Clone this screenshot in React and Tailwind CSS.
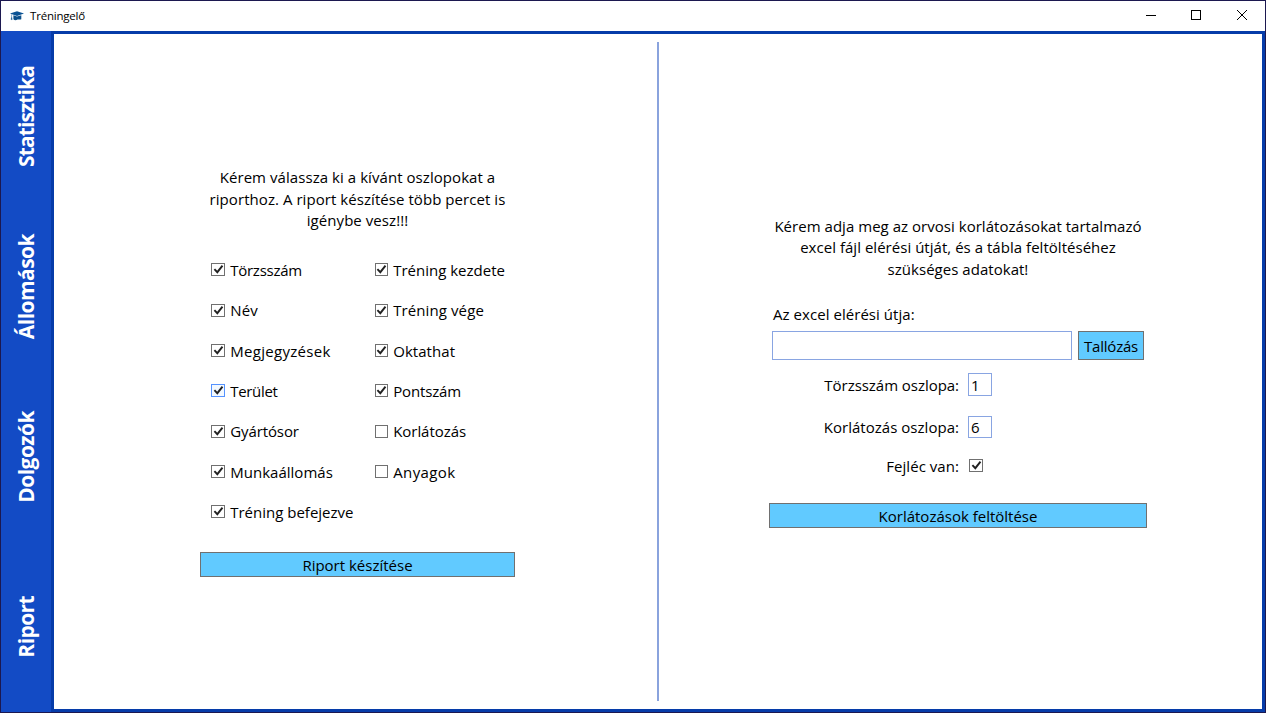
const leftColumn = [
  { label: "Törzsszám", checked: true, track: "tracking-[-0.25px]" },
  { label: "Név", checked: true, track: "tracking-[0.2px]" },
  { label: "Megjegyzések", checked: true, track: "tracking-[0.3px]" },
  { label: "Terület", checked: true, hot: true, track: "tracking-[-0.3px]" },
  { label: "Gyártósor", checked: true, track: "tracking-[-0.1px]" },
  { label: "Munkaállomás", checked: true, track: "tracking-[0.02px]" },
  { label: "Tréning befejezve", checked: true, track: "tracking-[0px]" },
];

const rightColumn = [
  { label: "Tréning kezdete", checked: true, track: "tracking-[0px]" },
  { label: "Tréning vége", checked: true, track: "tracking-[0.1px]" },
  { label: "Oktathat", checked: true, track: "tracking-[0.05px]" },
  { label: "Pontszám", checked: true, track: "tracking-[-0.15px]" },
  { label: "Korlátozás", checked: false, track: "tracking-[-0.05px]" },
  { label: "Anyagok", checked: false, track: "tracking-[0.4px]" },
];

function CheckBox({ checked, hot, narrow }) {
  return (
    <span
      className={`flex h-[13px] shrink-0 items-center justify-center border ${narrow ? "w-[13px]" : "w-[14px]"} ${
        hot ? "border-[#5593ff] bg-[#f3f9ff]" : "border-[#707070] bg-white"
      }`}
    >
      {checked && (
        <svg width="11" height="11" viewBox="0 0 11 11" className="shrink-0">
          <path d="M1.4 5.2 L4.3 8.2 L9.5 1.6" fill="none" stroke="#212121" strokeWidth="1.9" />
        </svg>
      )}
    </span>
  );
}

function Option({ label, checked, hot, narrow, track }) {
  return (
    <label className="flex h-[40.3px] items-center gap-[5.2px] whitespace-nowrap">
      <CheckBox checked={checked} hot={hot} narrow={narrow} />
      <span className={`pt-[1.8px] ${track}`}>{label}</span>
    </label>
  );
}

function Tab({ children, track }) {
  return (
    <div className="flex flex-1 items-center justify-center">
      <span
        className={`rotate-180 text-[21px] leading-[30px] font-bold whitespace-nowrap text-white [writing-mode:vertical-rl] ${track}`}
      >
        {children}
      </span>
    </div>
  );
}

function TitleBar() {
  return (
    <header className="flex h-[30px] shrink-0 items-center bg-white pl-[9px]">
      <svg width="15" height="11" viewBox="0 0 15 11">
        <path d="M0 2.6 L7 0.2 L14 2.6 L7 5 Z" fill="#0b5394" />
        <path d="M3.4 4.3 L7 5.6 L11.3 4.3 V8.2 C10 9.2 8.6 8 7.4 8.6 C6 9.4 4.6 9.4 3.4 8.2 Z" fill="#0b4f8a" />
        <path d="M1.6 3.2 V6.2 L1 8.6 H2.2 L1.8 6.2" fill="#0b5394" stroke="#0b5394" strokeWidth="0.4" />
      </svg>
      <span className="ml-[5px] text-[11.5px] leading-[16px] tracking-[-0.2px]">Tréningelő</span>
      <div className="ml-auto flex h-full items-center">
        <svg width="138" height="30" viewBox="0 0 138 30" fill="none" stroke="#000">
          <path d="M19 14.5 H29" />
          <rect x="64.5" y="9.5" width="9" height="9" />
          <path d="M110 9 L120 19 M120 9 L110 19" />
        </svg>
      </div>
    </header>
  );
}

export default function App() {
  return (
    <div className="flex h-[713px] w-[1266px] flex-col overflow-hidden border border-[#1c1850] bg-white font-['Open_Sans','Noto_Sans',sans-serif] text-[15px] leading-[21.5px] text-black">
      <TitleBar />
      <div className="flex min-h-0 flex-1">
        <nav className="flex w-[50px] shrink-0 flex-col bg-[#134bc5]">
          <Tab track="tracking-[-0.9px]">Statisztika</Tab>
          <Tab track="tracking-[-0.55px]">Állomások</Tab>
          <Tab track="tracking-[-0.55px]">Dolgozók</Tab>
          <Tab track="tracking-[-0.6px]">Riport</Tab>
        </nav>
        <main className="flex flex-1 border-[3px] border-[#063ca9] py-2">
          <section className="flex w-[603px] flex-col items-start pt-[125px] pl-[146px]">
            <p className="flex w-[315px] flex-col items-center tracking-[0.06px] whitespace-nowrap">
              <span>Kérem válassza ki a kívánt oszlopokat a</span>
              <span>riporthoz. A riport készítése több percet is</span>
              <span>igénybe vesz!!!</span>
            </p>
            <div className="mt-[18.3px] flex pl-[11px]">
              <div className="w-[164px]">
                {leftColumn.map((o) => (
                  <Option key={o.label} {...o} />
                ))}
              </div>
              <div>
                {rightColumn.map((o) => (
                  <Option key={o.label} {...o} narrow />
                ))}
              </div>
            </div>
            <button className="mt-[19.8px] flex h-[25px] w-[315px] items-center justify-center border border-[#707070] bg-[#61caff] pt-[3px]">
              Riport készítése
            </button>
          </section>
          <div className="w-[2px] shrink-0 bg-[#8aa3dd]" />
          <section className="flex flex-1 flex-col items-start pt-[173.9px] pl-[110px]">
            <p className="flex w-[378px] flex-col items-center tracking-[0.03px] whitespace-nowrap">
              <span>Kérem adja meg az orvosi korlátozásokat tartalmazó</span>
              <span>excel fájl elérési útját, és a tábla feltöltéséhez</span>
              <span>szükséges adatokat!</span>
            </p>
            <div className="mt-[23.6px] h-[27px] pl-1 tracking-[0.05px]">Az excel elérési útja:</div>
            <div className="flex h-[29px] gap-[6px] pl-[3px]">
              <div className="w-[300px] border border-[#89a5e2] bg-white" />
              <button className="flex w-[66px] items-center justify-center border border-[#707070] bg-[#61caff] pt-[3px] tracking-[-0.2px]">
                Tallózás
              </button>
            </div>
            <div className="mt-[13px] flex h-[23px] items-center">
              <span className="mr-[9px] w-[190px] pt-[2px] text-right tracking-[-0.04px] whitespace-nowrap">Törzsszám oszlopa:</span>
              <span className="flex h-[23px] w-6 items-center border border-[#89a5e2] pt-[2px] pl-[2px]">1</span>
            </div>
            <div className="mt-[20px] flex h-[22px] items-center">
              <span className="mr-[9px] w-[190px] pt-px text-right tracking-[0.03px] whitespace-nowrap">Korlátozás oszlopa:</span>
              <span className="flex h-[22px] w-6 items-center border border-[#89a5e2] pt-px pl-[2px]">6</span>
            </div>
            <div className="mt-[17px] flex h-[21px] items-center">
              <span className="mr-[10px] w-[190px] pt-[2px] text-right tracking-[0.05px] whitespace-nowrap">Fejléc van:</span>
              <CheckBox checked />
            </div>
            <button className="mt-[27px] flex h-[25px] w-[378px] items-center justify-center border border-[#707070] bg-[#61caff] pt-[3px]">
              Korlátozások feltöltése
            </button>
          </section>
        </main>
      </div>
    </div>
  );
}
